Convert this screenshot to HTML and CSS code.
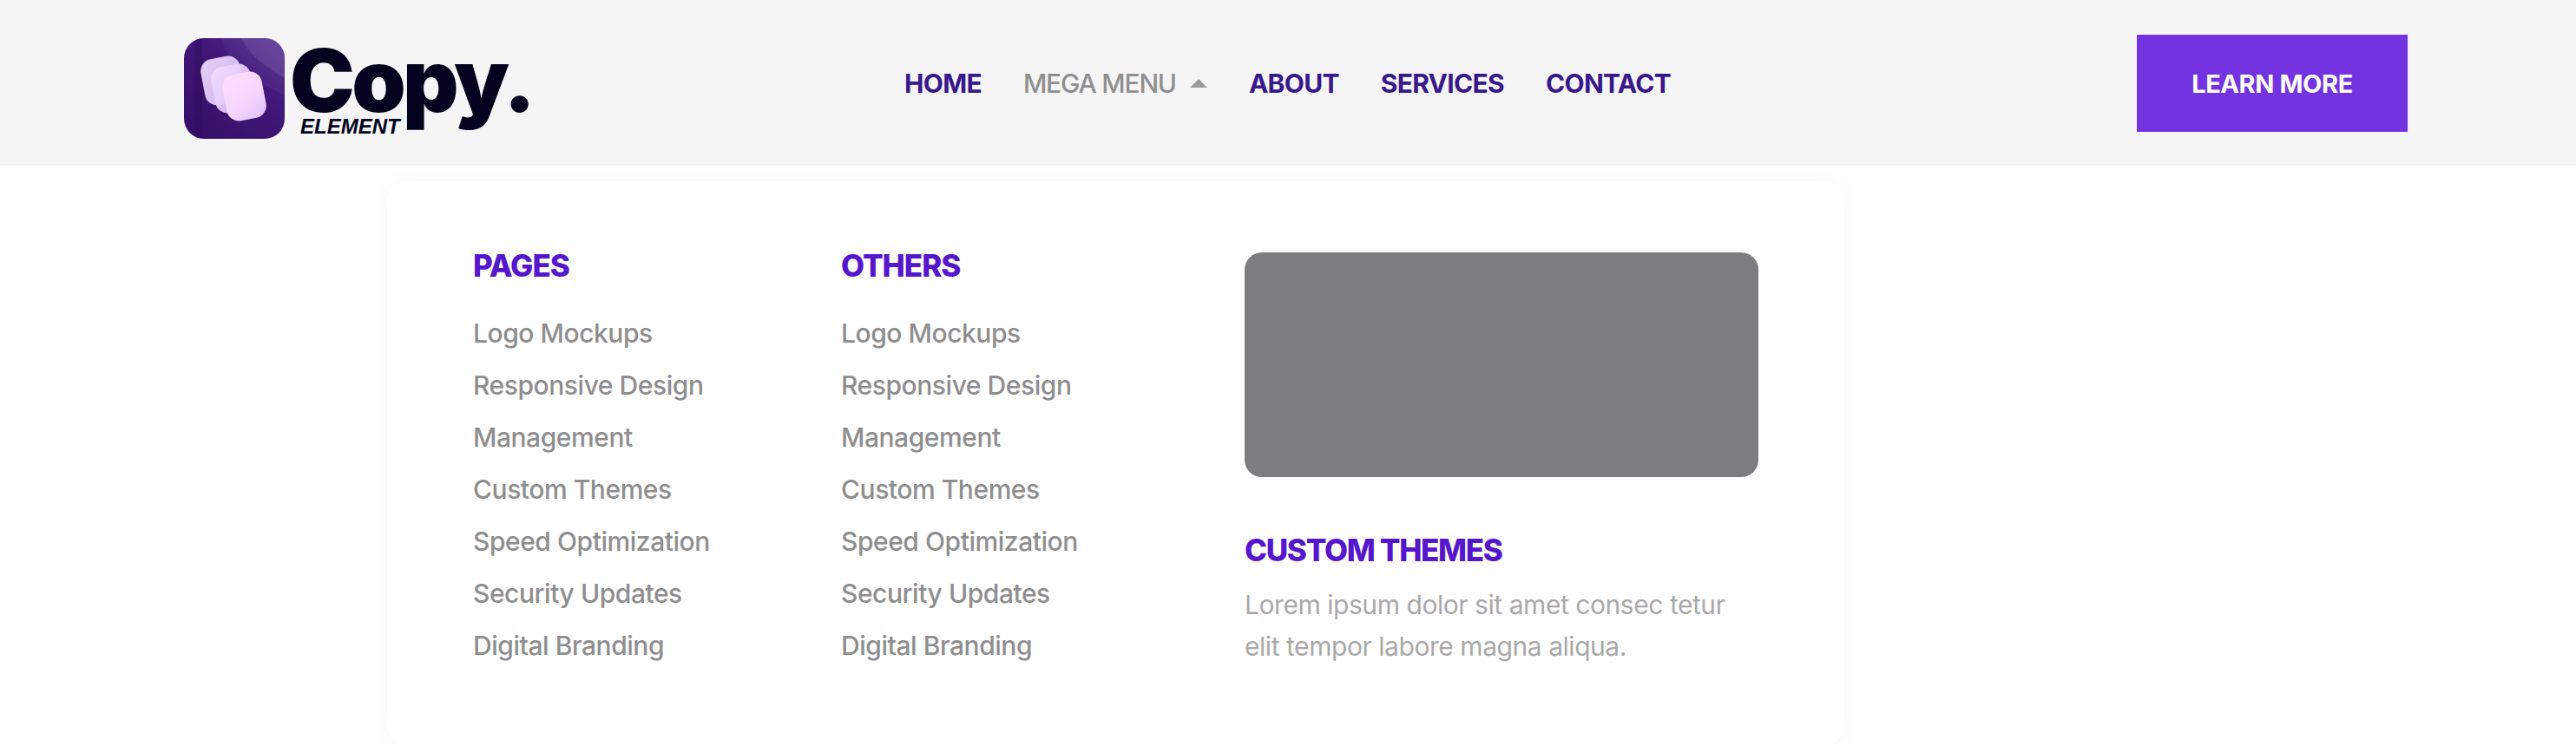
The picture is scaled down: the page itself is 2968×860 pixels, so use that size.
FILE: index.html
```html
<!DOCTYPE html>
<html>
<head>
    <title>Copy Element</title>
    <link rel="stylesheet" href="styles.css">
</head>
<body>

<header class="site-header">
    <a class="logo" href="#">
        <svg class="logo-icon" viewBox="0 0 116 116" width="116" height="116">
            <defs>
                <linearGradient id="tileBg" x1="1" y1="0" x2="0.2" y2="1">
                    <stop offset="0" stop-color="#5a3590"/>
                    <stop offset="0.4" stop-color="#42187a"/>
                    <stop offset="1" stop-color="#360f68"/>
                </linearGradient>
                <linearGradient id="cardBack" x1="0" y1="0" x2="1" y2="1">
                    <stop offset="0" stop-color="#f1e0ff"/>
                    <stop offset="1" stop-color="#dcbcfb"/>
                </linearGradient>
                <linearGradient id="cardFront" x1="0.2" y1="0" x2="0.8" y2="1">
                    <stop offset="0" stop-color="#fcdcff"/>
                    <stop offset="0.6" stop-color="#f6d6ff"/>
                    <stop offset="1" stop-color="#e2c2ff"/>
                </linearGradient>
                <clipPath id="tileClip">
                    <rect width="116" height="116" rx="23"/>
                </clipPath>
            </defs>
            <rect width="116" height="116" rx="23" fill="url(#tileBg)"/>
            <g clip-path="url(#tileClip)">
                <path d="M42 0 C50 24 70 44 116 66 L116 0 Z" fill="#6a49a0" opacity="0.22"/>
                <path d="M66 0 C76 20 92 32 116 46 L116 0 Z" fill="#7d5cab" opacity="0.4"/>
                <rect x="12" y="0" width="9" height="116" fill="#2d0a5a" opacity="0.4"/>
            </g>
            <rect x="21.5" y="22" width="46" height="54" rx="14" transform="rotate(-11 44.5 49)" fill="url(#cardBack)" opacity="0.92"/>
            <rect x="33.5" y="31" width="46" height="54" rx="14" transform="rotate(-11 56.5 58)" fill="url(#cardBack)" opacity="0.92"/>
            <rect x="46.5" y="40" width="46" height="54" rx="14" transform="rotate(-11 69.5 67)" fill="url(#cardFront)"/>
        </svg>
        <span class="logo-text">
            <span class="logo-name">Copy.</span>
            <span class="logo-sub">ELEMENT</span>
        </span>
    </a>

    <nav class="main-nav">
        <a href="#">HOME</a>
        <a href="#" class="active">MEGA MENU <span class="caret"></span></a>
        <a href="#">ABOUT</a>
        <a href="#">SERVICES</a>
        <a href="#">CONTACT</a>
    </nav>

    <a class="learn-btn" href="#">LEARN MORE</a>
</header>

<div class="mega-panel">
    <div class="link-col">
        <h4>PAGES</h4>
        <ul>
            <li>Logo Mockups</li>
            <li>Responsive Design</li>
            <li>Management</li>
            <li>Custom Themes</li>
            <li>Speed Optimization</li>
            <li>Security Updates</li>
            <li>Digital Branding</li>
        </ul>
    </div>
    <div class="link-col">
        <h4>OTHERS</h4>
        <ul>
            <li>Logo Mockups</li>
            <li>Responsive Design</li>
            <li>Management</li>
            <li>Custom Themes</li>
            <li>Speed Optimization</li>
            <li>Security Updates</li>
            <li>Digital Branding</li>
        </ul>
    </div>
    <div class="promo">
        <div class="promo-img"></div>
        <h4>CUSTOM THEMES</h4>
        <p>Lorem ipsum dolor sit amet consec tetur<br>elit tempor labore magna aliqua.</p>
    </div>
</div>

</body>
</html>
```

FILE: styles.css
```css
html, body {
    height: 100%;
}
body {
    font-family: 'Inter', sans-serif;
    margin: 0;
    padding: 0;
    background-color: #fff;
    overflow: hidden;
}
a {
    text-decoration: none;
    color: inherit;
}

.site-header {
    display: grid;
    grid-template-columns: 830px 1fr auto;
    align-items: center;
    height: 191px;
    padding: 0 194px 0 212px;
    background-color: #f5f5f5;
}

.logo {
    display: flex;
    align-items: flex-start;
    gap: 6px;
    margin-top: 13px;
}
.logo-icon {
    flex: none;
}
.logo-text {
    display: flex;
    flex-direction: column;
    height: 116px;
}
.logo-name {
    margin-top: 4px;
    font-size: 100px;
    font-weight: 900;
    line-height: 90px;
    letter-spacing: -3.6px;
    color: #02021f;
}
.logo-sub {
    font-family: 'Liberation Sans', sans-serif;
    font-size: 24px;
    font-weight: 700;
    font-style: italic;
    line-height: 16px;
    margin-left: 12px;
    color: #02021f;
}

.main-nav {
    display: flex;
    align-items: center;
    gap: 48px;
    font-size: 30px;
    font-weight: 700;
    letter-spacing: -0.7px;
    color: #38188a;
}
.main-nav .active {
    display: flex;
    align-items: center;
    gap: 16px;
    font-weight: 500;
    letter-spacing: -1.2px;
    color: #8f8f8f;
}
.caret {
    width: 0;
    height: 0;
    border-left: 10px solid transparent;
    border-right: 10px solid transparent;
    border-bottom: 10px solid #9a9a9a;
}

.learn-btn {
    display: flex;
    align-items: center;
    justify-content: center;
    width: 312px;
    height: 112px;
    margin-top: 1px;
    background-color: #7433e0;
    font-size: 29px;
    font-weight: 700;
    letter-spacing: -0.4px;
    color: #fff;
}

.mega-panel {
    display: grid;
    grid-template-columns: 424px 465px 592px;
    box-sizing: border-box;
    width: 1679px;
    height: 651px;
    margin: 18px 0 0 446px;
    padding: 82px 99px 0;
    background-color: #fff;
    border-radius: 24px;
    box-shadow: 0 0 30px rgba(0, 0, 0, 0.035);
}
.mega-panel h4 {
    margin: 0;
    font-size: 35px;
    font-weight: 800;
    line-height: 40px;
    letter-spacing: -1px;
    color: #5516cc;
}
.link-col h4 {
    margin-top: -5px;
}
.link-col ul {
    list-style: none;
    margin: 28px 0 0;
    padding: 0;
}
.link-col li {
    font-size: 30px;
    font-weight: 500;
    line-height: 60px;
    letter-spacing: -0.45px;
    color: #8e8e8e;
}
.promo-img {
    height: 259px;
    border-radius: 20px;
    background-color: #7c7d7f;
}
.mega-panel .promo h4 {
    margin-top: 64px;
    letter-spacing: -1.3px;
}
.promo p {
    margin: 19px 0 0;
    font-size: 30px;
    line-height: 48px;
    letter-spacing: -0.45px;
    color: #a9a9a9;
}
```
